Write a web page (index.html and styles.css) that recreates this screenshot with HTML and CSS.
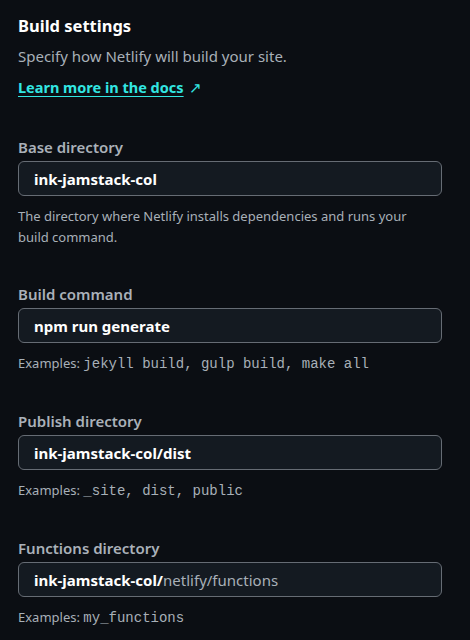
FILE: index.html
```html
<!DOCTYPE html>
<html lang="en">
<head>
<meta charset="utf-8">
<link rel="stylesheet" href="styles.css">
</head>
<body>
<div class="panel">
  <h2 class="title">Build settings</h2>
  <p class="lead">Specify how Netlify will build your site.</p>
  <a class="doclink" href="#"><span class="u">Learn more in the docs</span> <span class="arrow">&#8599;</span></a>

  <div class="field first">
    <label class="label">Base directory</label>
    <div class="input"><span class="val">ink-jamstack-col</span></div>
    <p class="help wrap">The directory where Netlify installs dependencies and runs your build command.</p>
  </div>

  <div class="field">
    <label class="label">Build command</label>
    <div class="input"><span class="val">npm run generate</span></div>
    <p class="help">Examples: <code>jekyll build, gulp build, make all</code></p>
  </div>

  <div class="field">
    <label class="label">Publish directory</label>
    <div class="input"><span class="val">ink-jamstack-col/dist</span></div>
    <p class="help">Examples: <code>_site, dist, public</code></p>
  </div>

  <div class="field">
    <label class="label">Functions directory</label>
    <div class="input"><span class="val">ink-jamstack-col/</span><span class="ph">netlify/functions</span></div>
    <p class="help">Examples: <code>my_functions</code></p>
  </div>
</div>
</body>
</html>
```
FILE: styles.css
```css
html, body {
  margin: 0;
  padding: 0;
  background: #0b0e13;
}
body {
  font-family: "Noto Sans", "Open Sans", sans-serif;
  color: #e8eaed;
}
.panel {
  padding: 14px 28px 0 18px;
  display: flex;
  flex-direction: column;
}
.title {
  margin: 0;
  font-size: 16.5px;
  font-weight: 700;
  line-height: 24px;
  color: #ffffff;
}
.lead {
  margin: 7px 0 0;
  font-size: 15px;
  line-height: 22px;
  color: #a8b0b8;
}
.doclink {
  margin-top: 9px;
  font-size: 14.5px;
  line-height: 22px;
  font-weight: 700;
  color: #32e6e2;
  text-decoration: none;
  align-self: flex-start;
}
.doclink .u {
  text-decoration: underline;
  text-underline-offset: 3px;
}
.doclink .arrow {
  font-weight: 400;
  margin-left: 2px;
}
.field {
  display: flex;
  flex-direction: column;
  margin-top: 36px;
}
.field.first {
  margin-top: 39px;
}
.label {
  font-size: 15px;
  font-weight: 600;
  line-height: 20px;
  color: #aab1b9;
}
.input {
  margin-top: 4px;
  height: 33px;
  border: 1px solid #666c74;
  border-radius: 6px;
  background: #141a21;
  display: flex;
  align-items: center;
  padding: 0 15px;
  font-size: 15px;
}
.val {
  font-weight: 700;
  color: #ffffff;
}
.ph {
  color: #a8b0b8;
}
.help {
  margin: 10px 0 0;
  font-size: 13px;
  line-height: 21px;
  color: #a8b0b8;
}
.help.wrap {
  max-width: 400px;
}
code {
  font-family: "Liberation Mono", monospace;
  font-size: 14px;
  color: #a8b0b8;
}
```
